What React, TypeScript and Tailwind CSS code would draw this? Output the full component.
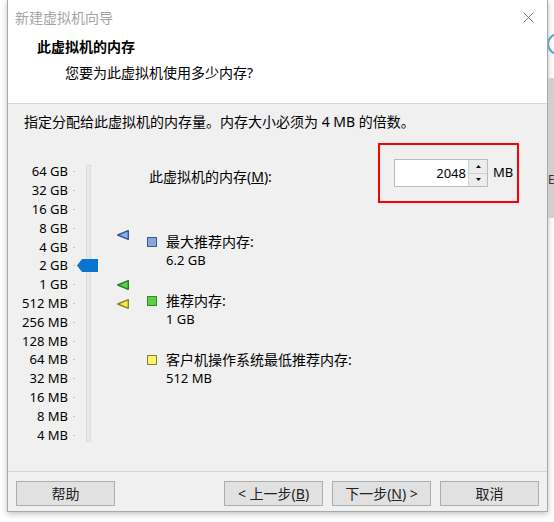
import React from 'react';

const scale = ['64 GB', '32 GB', '16 GB', '8 GB', '4 GB', '2 GB', '1 GB', '512 MB', '256 MB', '128 MB', '64 MB', '32 MB', '16 MB', '8 MB', '4 MB'];

const Marker = ({ fill, stroke, top }: { fill: string; stroke: string; top: string }) => (
  <svg className={`absolute left-[101px] ${top}`} width="12" height="10" viewBox="0 0 12 10">
    <polygon points="0.7,5 11.3,0.7 11.3,9.3" fill={fill} stroke={stroke} strokeWidth="1.4" strokeLinejoin="round" />
  </svg>
);

const Legend = ({ color, title, value, className }: { color: string; title: string; value: string; className: string }) => (
  <div className={`flex items-start ${className}`}>
    <div className={`mt-[4px] w-[10px] h-[10px] border ${color}`} />
    <div className="ml-[9px] leading-[18px]">
      <div className="text-[14px]">{title}</div>
      <div className="text-[13px]">{value}</div>
    </div>
  </div>
);

const Btn = ({ children }: { children: React.ReactNode }) => (
  <button className="w-[99px] h-[25px] bg-[#e1e1e1] border border-[#adadad] text-[14px] text-[#222] leading-none flex items-center justify-center">
    {children}
  </button>
);

export default function App() {
  return (
    <div className="w-[554px] h-[522px] bg-white flex font-['Noto_Sans','Noto_Sans_CJK_SC',sans-serif] text-black overflow-hidden">
      {/* dialog */}
      <div className="ml-[7px] w-[541px] h-[512px] flex flex-col border-x border-b border-[#a8a8a8] shadow-[0_2px_6px_rgba(0,0,0,0.25)]">
        {/* title bar */}
        <div className="h-[34px] bg-white flex items-center justify-between pl-[7px] pr-[13px]">
          <span className="text-[14px] text-[#a3a3a3]">新建虚拟机向导</span>
          <svg width="11" height="11" viewBox="0 0 11 11">
            <path d="M0.5 0.5 L10.5 10.5 M10.5 0.5 L0.5 10.5" stroke="#777" strokeWidth="1" />
          </svg>
        </div>

        {/* header */}
        <div className="h-[70px] bg-white border-b border-[#d9d9d9] pt-[3px]">
          <div className="pl-[29px] text-[14px] font-bold leading-[20px]">此虚拟机的内存</div>
          <div className="pl-[57px] mt-[6px] text-[14px] leading-[20px]">您要为此虚拟机使用多少内存?</div>
        </div>

        {/* body */}
        <div className="flex-1 bg-[#f0f0f0] pt-[8px]">
          <div className="pl-[16px] text-[14px] leading-[20px]">指定分配给此虚拟机的内存量。内存大小必须为 4 MB 的倍数。</div>

          <div className="mt-[11px] pl-[8px] flex items-start">
            {/* slider */}
            <div className="relative w-[131px] flex items-start">
              <div className="pt-[19.6px] flex flex-col">
                {scale.map((s) => (
                  <div key={s} className="h-[18.8px] flex items-center">
                    <span className="w-[52px] text-right text-[13px] leading-none">{s}</span>
                    <span className="ml-[5px] w-[2px] h-px bg-[#c4c4c4]" />
                  </div>
                ))}
              </div>
              <div className="ml-[11px] mt-[22px] w-[5px] h-[277px] bg-[#e6e8e9] border border-[#dcdcdc]" />
              <svg className="absolute left-[61px] top-[116px]" width="21" height="13" viewBox="0 0 21 13">
                <polygon points="0,6.5 5,0 21,0 21,13 5,13" fill="#0a74d1" />
              </svg>
              <Marker fill="#8fb0e4" stroke="#2f5498" top="top-[87px]" />
              <Marker fill="#5fcf4a" stroke="#23801f" top="top-[137px]" />
              <Marker fill="#f2ea4c" stroke="#8a8620" top="top-[156px]" />
            </div>

            {/* right content */}
            <div className="flex-1 pr-[28px] flex flex-col">
              <div className="h-[60px] flex items-center">
                <span className="ml-[2px] mt-[6px] text-[14px]">
                  此虚拟机的内存(<span className="underline">M</span>):
                </span>
                <div className="ml-auto w-[141px] h-[60px] border-2 border-[#ff0000] flex items-center pl-[14px]">
                  <div className="w-[94px] h-[28px] flex border border-[#bcbcbc] bg-white">
                    <div className="flex-1 text-right pr-[2px] text-[13px] leading-[26px]">2048</div>
                    <div className="w-[19px] flex flex-col bg-[#ececec] border-l border-[#d0d0d0]">
                      <div className="flex-1 flex items-center justify-center border-b border-[#d0d0d0]">
                        <svg width="5" height="3" viewBox="0 0 5 3"><polygon points="2.5,0 5,3 0,3" fill="#111" /></svg>
                      </div>
                      <div className="flex-1 flex items-center justify-center">
                        <svg width="5" height="3" viewBox="0 0 5 3"><polygon points="0,0 5,0 2.5,3" fill="#111" /></svg>
                      </div>
                    </div>
                  </div>
                  <span className="ml-[5px] text-[13px]">MB</span>
                </div>
              </div>

              <Legend className="mt-[30px]" color="bg-[#8aa6d8] border-[#3c5a99]" title="最大推荐内存:" value="6.2 GB" />
              <Legend className="mt-[23px]" color="bg-[#5ccf47] border-[#2f8a26]" title="推荐内存:" value="1 GB" />
              <Legend className="mt-[23px]" color="bg-[#fbf36e] border-[#82802c]" title="客户机操作系统最低推荐内存:" value="512 MB" />
            </div>
          </div>
        </div>

        {/* footer */}
        <div className="h-[40px] bg-[#f0f0f0] border-t border-[#d5d5d5] pt-[9px] pl-[8px] pr-[8px] flex items-start">
          <Btn>帮助</Btn>
          <div className="flex-1" />
          <div className="flex gap-[9px]">
            <Btn>&lt; 上一步(<span className="underline">B</span>)</Btn>
            <Btn>下一步(<span className="underline">N</span>) &gt;</Btn>
            <Btn>取消</Btn>
          </div>
        </div>
      </div>

      {/* window behind, right edge */}
      <div className="flex-1 flex flex-col overflow-hidden">
        <svg className="mt-[32px] -ml-[2px]" width="24" height="24" viewBox="0 0 24 24">
          <circle cx="12" cy="12" r="10" fill="none" stroke="#5aa9c8" strokeWidth="2" />
        </svg>
        <div className="mt-[22px] h-[140px] bg-[#cfcfcf] flex flex-col">
          <span className="mt-[96px] text-[12px] leading-none text-[#333]">E</span>
        </div>
      </div>
    </div>
  );
}
